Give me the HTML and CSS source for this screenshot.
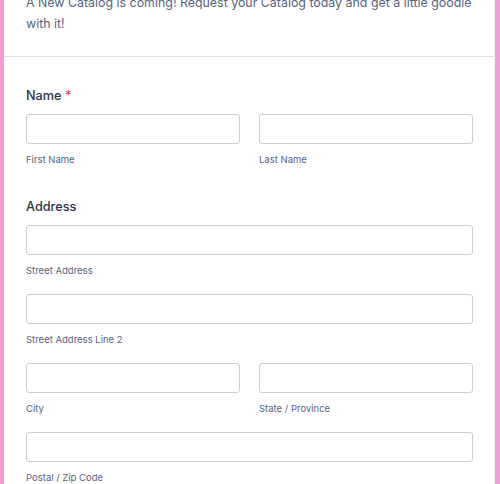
FILE: index.html
```html
<!DOCTYPE html>
<html lang="en">
<head>
<meta charset="utf-8">
<title>Catalog Request</title>
<link rel="stylesheet" href="styles.css">
</head>
<body>
<div class="card">
  <div class="header">
    <p class="desc">A New Catalog is coming! Request your Catalog today and get a little goodie with it!</p>
  </div>
  <div class="form">
    <div class="field">
      <div class="label">Name <span class="req">*</span></div>
      <div class="row">
        <div class="col"><div class="input"></div><div class="sub">First Name</div></div>
        <div class="col"><div class="input"></div><div class="sub">Last Name</div></div>
      </div>
    </div>
    <div class="field">
      <div class="label">Address</div>
      <div class="col"><div class="input"></div><div class="sub">Street Address</div></div>
      <div class="col"><div class="input"></div><div class="sub">Street Address Line 2</div></div>
      <div class="row">
        <div class="col"><div class="input"></div><div class="sub">City</div></div>
        <div class="col"><div class="input"></div><div class="sub">State / Province</div></div>
      </div>
      <div class="col"><div class="input"></div><div class="sub">Postal / Zip Code</div></div>
    </div>
  </div>
</div>
</body>
</html>
```

FILE: styles.css
```css
html, body {
  margin: 0;
  padding: 0;
  height: 100%;
  overflow: hidden;
}
body {
  background: #f59bd5;
  font-family: Inter, "Liberation Sans", sans-serif;
}
.card {
  display: flow-root;
  margin: 0 5px 0 4px;
  background: #ffffff;
  min-height: 100%;
  border-right: 1px solid #f3f3f6;
  box-sizing: border-box;
}
.header {
  margin-top: -8px;
  padding: 0 20px 22px 22px;
  border-bottom: 1px solid #dcdfe7;
}
.desc {
  margin: 0;
  font-size: 12.4px;
  line-height: 21px;
  color: #57647e;
}
.form {
  padding: 30px 21px 0 22px;
}
.field {
  display: flex;
  flex-direction: column;
}
.field + .field {
  margin-top: 32px;
}
.label {
  font-size: 12.7px;
  line-height: 17px;
  font-weight: 500;
  color: #2c3345;
  margin-bottom: 10px;
}
.req {
  color: #f23a3c;
}
.row {
  display: flex;
  gap: 19px;
}
.row .col {
  flex: 1;
}
.col {
  display: flex;
  flex-direction: column;
}
.field > .col + .col,
.field > .row + .col,
.field > .col + .row {
  margin-top: 17px;
}
.input {
  height: 30px;
  border: 1px solid #c8cdd9;
  border-radius: 3px;
  box-sizing: border-box;
  background: #fff;
}
.sub {
  margin-top: 10px;
  font-size: 9.5px;
  line-height: 12px;
  color: #57647e;
}
```
